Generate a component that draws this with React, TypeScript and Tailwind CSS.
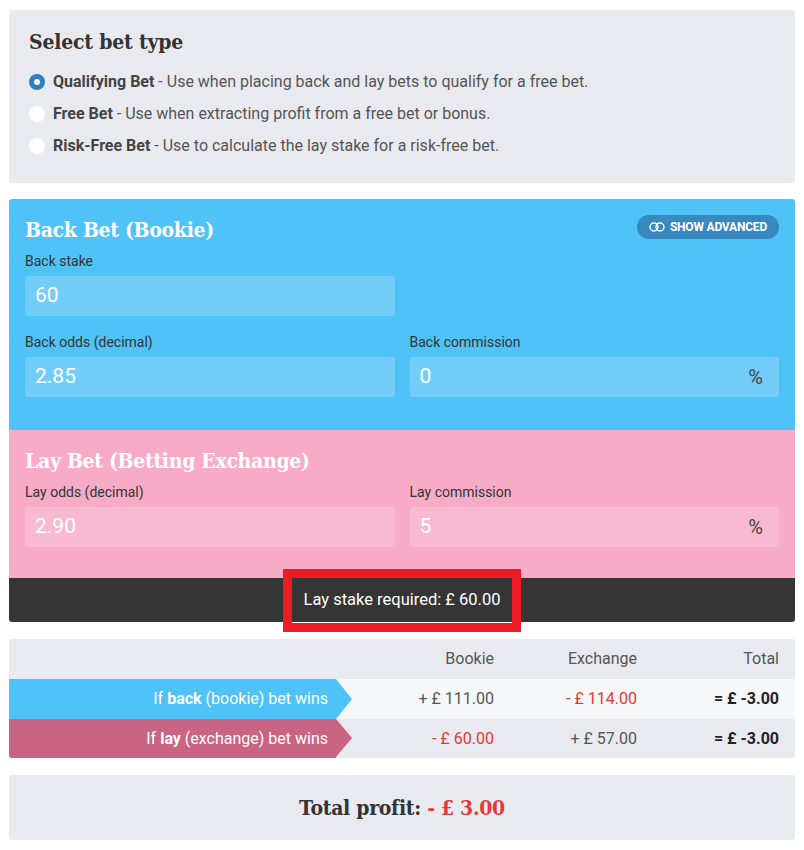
import React from "react";

const slab = "font-['DejaVu_Serif',serif] font-stretch-condensed";

function Radio({ checked }: { checked?: boolean }) {
  return checked ? (
    <span className="w-4 h-4 rounded-full bg-[#2d7fbd] flex items-center justify-center shrink-0">
      <span className="w-[6px] h-[6px] rounded-full bg-white" />
    </span>
  ) : (
    <span className="w-4 h-4 rounded-full bg-white shrink-0" />
  );
}

function Field({
  label,
  value,
  pct,
  pink,
}: {
  label: string;
  value: string;
  pct?: boolean;
  pink?: boolean;
}) {
  return (
    <div className="flex flex-col">
      <div className="text-[14px] leading-[18px] text-[#333] mb-[6px]">{label}</div>
      <div
        className={`h-10 rounded-[3px] flex items-center justify-between pl-[10px] pr-[16px] ${
          pink ? "bg-[#f8bad0]" : "bg-[#73cdf9]"
        }`}
      >
        <span className="text-white text-[21px]">{value}</span>
        {pct && <span className="text-[#444] text-[20px]">%</span>}
      </div>
    </div>
  );
}

export default function App() {
  return (
    <div className="w-[804px] min-h-[850px] bg-white pt-[10px] px-[9px] font-['Roboto',sans-serif]">
      {/* Select bet type */}
      <div className="h-[173px] rounded-[3px] bg-[#e9eaef] px-5 pt-[18px]">
        <h2 className={`${slab} font-bold text-[21px] leading-[28px] tracking-[-0.2px] text-[#333]`}>
          Select bet type
        </h2>
        <div className="mt-[16px] flex flex-col gap-[12px] text-[16px] text-[#555]">
          <div className="flex items-center gap-2 h-5">
            <Radio checked />
            <span>
              <b className="text-[#444]">Qualifying Bet</b> - Use when placing back and lay bets to qualify for a free bet.
            </span>
          </div>
          <div className="flex items-center gap-2 h-5">
            <Radio />
            <span>
              <b className="text-[#444]">Free Bet</b> - Use when extracting profit from a free bet or bonus.
            </span>
          </div>
          <div className="flex items-center gap-2 h-5">
            <Radio />
            <span>
              <b className="text-[#444]">Risk-Free Bet</b> - Use to calculate the lay stake for a risk-free bet.
            </span>
          </div>
        </div>
      </div>

      {/* Calculator */}
      <div className="relative mt-4 rounded-[3px]">
        <div className="h-[231px] bg-[#4fc3f7] rounded-t-[3px] px-4 pt-[16px]">
          <div className="flex items-start justify-between">
            <h2 className={`${slab} font-bold text-white text-[21px] leading-[30px] tracking-[-0.3px]`}>
              Back Bet (Bookie)
            </h2>
            <div className="h-6 rounded-full bg-[#3889c0] flex items-center gap-[5px] px-3">
              <svg width="16" height="10" viewBox="0 0 16 10" fill="none" stroke="white" strokeWidth="1.4">
                <circle cx="5" cy="5" r="4" />
                <circle cx="11" cy="5" r="4" />
              </svg>
              <span className="text-white font-bold text-[12px] tracking-[-0.2px] uppercase">Show Advanced</span>
            </div>
          </div>
          <div className="grid grid-cols-2 gap-x-[15px] mt-[7px]">
            <Field label="Back stake" value="60" />
            <div />
          </div>
          <div className="grid grid-cols-2 gap-x-[15px] mt-[17px]">
            <Field label="Back odds (decimal)" value="2.85" />
            <Field label="Back commission" value="0" pct />
          </div>
        </div>
        <div className="h-[148px] bg-[#f7abc6] px-4 pt-[16px]">
          <h2 className={`${slab} font-bold text-white text-[21px] leading-[30px] tracking-[-0.3px]`}>
            Lay Bet (Betting Exchange)
          </h2>
          <div className="grid grid-cols-2 gap-x-[15px] mt-[7px]">
            <Field label="Lay odds (decimal)" value="2.90" pink />
            <Field label="Lay commission" value="5" pct pink />
          </div>
        </div>
        <div className="h-[44px] bg-[#353535] rounded-b-[3px] flex items-center justify-center">
          <span className="text-white text-[16.5px]">Lay stake required: £ 60.00</span>
        </div>
        <div className="absolute left-[274px] top-[370px] w-[238px] h-[63px] border-[9px] border-[#ec1c24] pointer-events-none" />
      </div>

      {/* Results table */}
      <div className="mt-[17px] rounded-[3px] bg-[#e9eaef] overflow-hidden text-[16px]">
        <div className="h-10 grid grid-cols-[343px_142px_143px_142px] items-center text-[#555]">
          <div />
          <div className="text-right">Bookie</div>
          <div className="text-right">Exchange</div>
          <div className="text-right">Total</div>
        </div>
        <div className="h-10 bg-[#f6f7f9] grid grid-cols-[343px_142px_143px_142px] items-center">
          <div className="relative h-10 w-[327px] bg-[#4fc3f7] flex items-center justify-end pr-2 text-white">
            <span>
              If <b>back</b> (bookie) bet wins
            </span>
            <span className="absolute right-[-16px] top-0 w-0 h-0 border-y-[20px] border-y-transparent border-l-[16px] border-l-[#4fc3f7]" />
          </div>
          <div className="text-right text-[#555]">+ £ 111.00</div>
          <div className="text-right text-[#e53935]">- £ 114.00</div>
          <div className="text-right font-bold text-[#222]">= £ -3.00</div>
        </div>
        <div className="h-[39px] grid grid-cols-[343px_142px_143px_142px] items-center">
          <div className="relative h-[39px] w-[327px] bg-[#c96582] flex items-center justify-end pr-2 text-white">
            <span>
              If <b>lay</b> (exchange) bet wins
            </span>
            <span className="absolute right-[-16px] top-0 w-0 h-0 border-y-[19.5px] border-y-transparent border-l-[16px] border-l-[#c96582]" />
          </div>
          <div className="text-right text-[#e53935]">- £ 60.00</div>
          <div className="text-right text-[#555]">+ £ 57.00</div>
          <div className="text-right font-bold text-[#222]">= £ -3.00</div>
        </div>
      </div>

      {/* Total profit */}
      <div className="mt-[17px] h-[65px] rounded-[3px] bg-[#e9eaef] flex items-center justify-center">
        <span className={`${slab} font-bold text-[21px] tracking-[-0.3px] text-[#333]`}>
          Total profit: <span className="text-[#e53935]">- £ 3.00</span>
        </span>
      </div>
    </div>
  );
}
